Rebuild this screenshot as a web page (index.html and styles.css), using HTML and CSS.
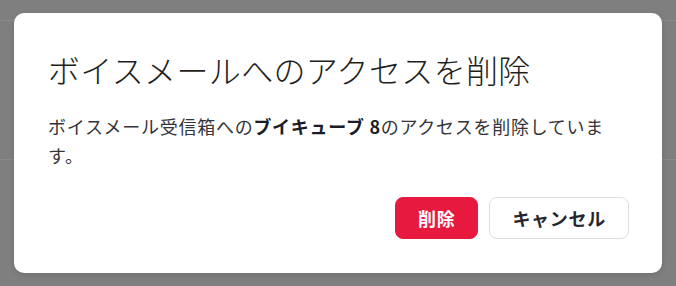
FILE: index.html
```html
<!DOCTYPE html>
<html lang="ja">
<head>
<meta charset="utf-8">
<title>ボイスメールへのアクセスを削除</title>
<link rel="stylesheet" href="styles.css">
</head>
<body>
<div class="backdrop">
  <div class="dialog" role="dialog" aria-labelledby="dlg-title">
    <h1 class="dialog-title" id="dlg-title">ボイスメールへのアクセスを削除</h1>
    <p class="dialog-text">ボイスメール受信箱への<strong>ブイキューブ 8</strong>のアクセスを削除しています。</p>
    <div class="dialog-actions">
      <button class="btn btn-danger" type="button">削除</button>
      <button class="btn btn-secondary" type="button">キャンセル</button>
    </div>
  </div>
</div>
</body>
</html>
```

FILE: styles.css
```css
html, body {
  margin: 0;
  padding: 0;
}
body {
  width: 676px;
  height: 286px;
  overflow: hidden;
  background: #808080;
  font-family: "Noto Sans CJK JP", "Noto Sans", sans-serif;
}
.backdrop {
  height: 286px;
  padding: 13px 14px 0 14px;
  box-sizing: border-box;
  background:
    linear-gradient(#8a8a8a, #8a8a8a) 0 20px / 100% 1px no-repeat,
    linear-gradient(#8a8a8a, #8a8a8a) 0 159px / 100% 1px no-repeat,
    #7f7f7f;
}
.dialog {
  width: 648px;
  box-sizing: border-box;
  background: #ffffff;
  border-radius: 10px;
  padding: 36px 34px 34px 34px;
  box-shadow: 0 2px 6px rgba(0, 0, 0, 0.12);
}
.dialog-title {
  margin: 0;
  font-size: 32px;
  line-height: 40px;
  font-weight: 300;
  letter-spacing: 0.35px;
  color: #1f1f22;
}
.dialog-text {
  margin: 23px 0 0 0;
  font-size: 18px;
  line-height: 1.6;
  letter-spacing: 0.04em;
  color: #34343a;
}
.dialog-text strong {
  font-weight: 700;
  color: #1c1c28;
}
.dialog-actions {
  display: flex;
  justify-content: flex-end;
  gap: 11px;
  margin-top: 27px;
  margin-right: -1px;
}
.btn {
  height: 42px;
  box-sizing: border-box;
  padding: 0 22px;
  border-radius: 8px;
  font-family: inherit;
  font-size: 18px;
  font-weight: 700;
  letter-spacing: 0.04em;
  cursor: pointer;
}
.btn-danger {
  background: #e8193f;
  border: 1px solid #e8193f;
  color: #ffffff;
}
.btn-secondary {
  background: #ffffff;
  border: 1px solid #dcdce3;
  color: #26262c;
}
```
